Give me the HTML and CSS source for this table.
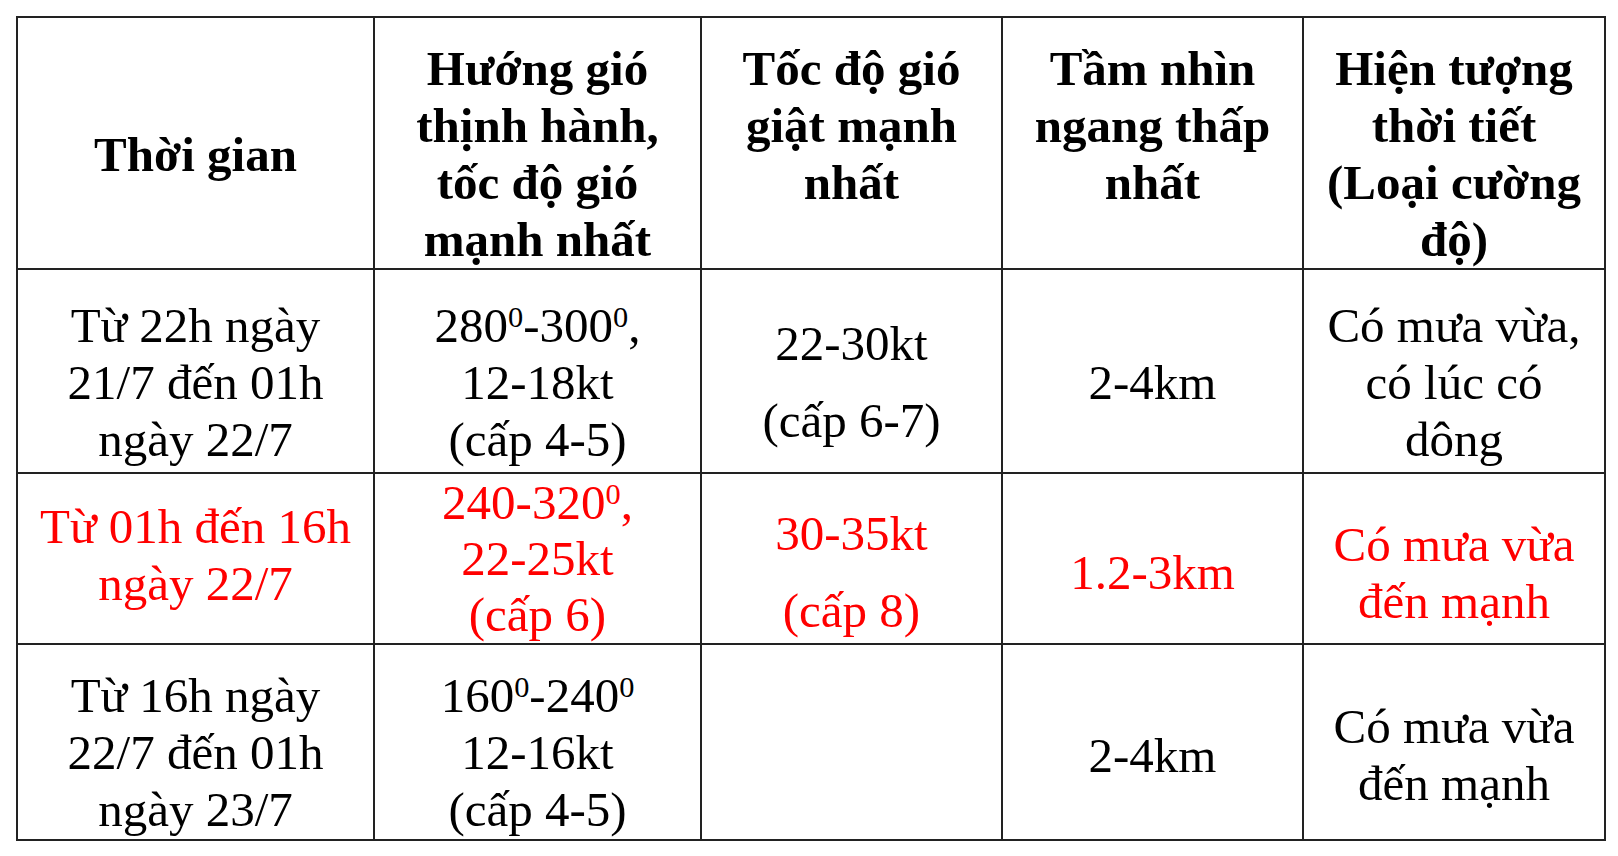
FILE: index.html
```html
<!DOCTYPE html>
<html lang="vi">
<head>
<meta charset="utf-8">
<title>Bảng dự báo thời tiết</title>
<link rel="stylesheet" href="styles.css">
</head>
<body>
<table class="forecast">
  <colgroup>
    <col class="c1"><col class="c2"><col class="c3"><col class="c4"><col class="c5">
  </colgroup>
  <tr class="head">
    <th>Thời gian</th>
    <th>Hướng gió<br>thịnh hành,<br>tốc độ gió<br>mạnh nhất</th>
    <th class="top">Tốc độ gió<br>giật mạnh<br>nhất</th>
    <th class="top">Tầm nhìn<br>ngang thấp<br>nhất</th>
    <th>Hiện tượng<br>thời tiết<br>(Loại cường<br>độ)</th>
  </tr>
  <tr class="r1">
    <td>Từ 22h ngày<br>21/7 đến 01h<br>ngày 22/7</td>
    <td>280<sup>0</sup>-300<sup>0</sup>,<br>12-18kt<br>(cấp 4-5)</td>
    <td class="wide">22-30kt<br>(cấp 6-7)</td>
    <td>2-4km</td>
    <td>Có mưa vừa,<br>có lúc có<br>dông</td>
  </tr>
  <tr class="r2 red">
    <td class="lift">Từ 01h đến 16h<br>ngày 22/7</td>
    <td class="full">240-320<sup>0</sup>,<br>22-25kt<br>(cấp 6)</td>
    <td class="wide snug"><span class="tight">30-35kt<br>(cấp 8)</span></td>
    <td class="low">1.2-3km</td>
    <td class="low">Có mưa vừa<br>đến mạnh</td>
  </tr>
  <tr class="r3">
    <td>Từ 16h ngày<br>22/7 đến 01h<br>ngày 23/7</td>
    <td>160<sup>0</sup>-240<sup>0</sup><br>12-16kt<br>(cấp 4-5)</td>
    <td></td>
    <td class="down">2-4km</td>
    <td class="down">Có mưa vừa<br>đến mạnh</td>
  </tr>
</table>
</body>
</html>
```
FILE: styles.css
```css
html, body {
  margin: 0;
  padding: 0;
  background: #ffffff;
}

body {
  padding: 16px 0 0 16px;
  font-family: "Liberation Serif", "Times New Roman", serif;
  color: #000000;
}

.forecast {
  border-collapse: collapse;
  table-layout: fixed;
  width: 1590px;
}

.c1 { width: 357px; }
.c2 { width: 327px; }
.c3 { width: 301px; }
.c4 { width: 301px; }
.c5 { width: 302px; }

.forecast th,
.forecast td {
  border: 2px solid #222222;
  font-size: 49px;
  line-height: 57px;
  text-align: center;
  vertical-align: middle;
  padding: 22px 2px 0;
  white-space: nowrap;
  overflow: hidden;
}

.forecast th {
  font-weight: bold;
}

.forecast th.top {
  vertical-align: top;
}

.head { height: 252px; }
.r1 { height: 204px; }
.r2 { height: 171px; }
.r3 { height: 196px; }

.r3 td {
  padding-top: 20px;
}

.forecast .r3 td.down {
  padding-top: 26px;
}

.red td {
  color: #ff0000;
}

.forecast td.wide {
  line-height: 77px;
}

.forecast td.snug {
  padding-top: 18px;
}

.tight {
  display: block;
  margin-bottom: -8px;
}

.forecast td.low {
  padding-top: 28px;
}

.forecast td.lift {
  padding: 0 2px 8px;
}

.forecast td.full {
  padding: 0 2px;
  line-height: 56px;
  overflow: visible;
}

sup {
  font-size: 0.62em;
  line-height: 0;
  vertical-align: 0.48em;
}
```
